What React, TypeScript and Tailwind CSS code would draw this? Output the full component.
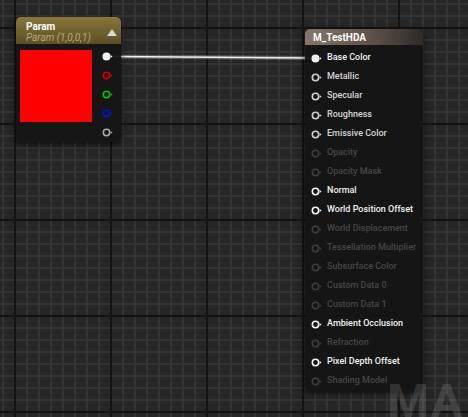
// Material graph: a Param vector node wired into the M_TestHDA result node.

type PinProps = { color: string; filled?: boolean };

function Pin({ color, filled }: PinProps) {
  return (
    <svg width="11" height="9" viewBox="0 0 11 9" className="shrink-0">
      <circle
        cx="4.5"
        cy="4.5"
        r="3.2"
        fill={filled ? color : "none"}
        stroke={color}
        strokeWidth="1.6"
      />
      <polygon points="8.7,2.9 10.6,4.5 8.7,6.1" fill={color} />
    </svg>
  );
}

const inputs: { label: string; state: "on" | "bright" | "off" | "linked" }[] = [
  { label: "Base Color", state: "linked" },
  { label: "Metallic", state: "on" },
  { label: "Specular", state: "on" },
  { label: "Roughness", state: "on" },
  { label: "Emissive Color", state: "on" },
  { label: "Opacity", state: "off" },
  { label: "Opacity Mask", state: "off" },
  { label: "Normal", state: "bright" },
  { label: "World Position Offset", state: "bright" },
  { label: "World Displacement", state: "off" },
  { label: "Tessellation Multiplier", state: "off" },
  { label: "Subsurface Color", state: "off" },
  { label: "Custom Data 0", state: "off" },
  { label: "Custom Data 1", state: "off" },
  { label: "Ambient Occlusion", state: "bright" },
  { label: "Refraction", state: "off" },
  { label: "Pixel Depth Offset", state: "bright" },
  { label: "Shading Model", state: "off" },
];

function ParamNode() {
  const pins = [
    { color: "#f2f2f2", filled: true },
    { color: "#d40000" },
    { color: "#00c800" },
    { color: "#0010e0" },
    { color: "#a8a8a8" },
  ];
  return (
    <div className="absolute left-[16px] top-[17px] w-[105px] h-[125px] rounded-[5px] bg-[#151515]/95 shadow-[0_2px_6px_rgba(0,0,0,0.7)] overflow-hidden">
      <div className="relative h-[27px] bg-[linear-gradient(to_bottom,#8a763a,#5c4f27)] pl-[10px] pt-[4px]">
        <div className="text-[10px] leading-[11px] font-bold text-white">Param</div>
        <div className="text-[10px] leading-[11px] italic text-[#b9a878]">
          Param (1,0,0,1)
        </div>
        <svg
          width="10"
          height="7"
          viewBox="0 0 10 7"
          className="absolute right-[4px] top-[12px]"
        >
          <polygon points="0,7 5,0 10,7" fill="#d6d6d6" />
        </svg>
      </div>
      <div className="flex pl-[4px] pt-[6px]">
        <div className="w-[72px] h-[72px] bg-[#ff0000]" />
        <div className="flex flex-col pl-[10px] -mt-[3.5px]">
          {pins.map((p, i) => (
            <div key={i} className="h-[19px] flex items-center">
              <Pin color={p.color} filled={p.filled} />
            </div>
          ))}
        </div>
      </div>
    </div>
  );
}

function ResultNode() {
  return (
    <div className="absolute left-[305px] top-[29px] w-[118px] h-[362px] rounded-[5px] bg-[#141414]/95 shadow-[0_2px_6px_rgba(0,0,0,0.7)] overflow-hidden">
      <div className="h-[16px] bg-[linear-gradient(to_right,#85766a,#5a5048_60%,#2e2a28)] pl-[8px] flex items-center">
        <span className="text-[10px] font-bold text-white">M_TestHDA</span>
      </div>
      <div className="flex flex-col pt-[3.5px] pl-[6px]">
        {inputs.map((it) => {
          const pin =
            it.state === "off"
              ? "#3c3c3c"
              : it.state === "on"
                ? "#cfcfcf"
                : "#f4f4f4";
          const text =
            it.state === "off"
              ? "text-[#464646]"
              : it.state === "on"
                ? "text-[#d6d6d6]"
                : "text-[#f2f2f2]";
          return (
            <div key={it.label} className="h-[19px] flex items-center gap-[5px]">
              <Pin color={pin} filled={it.state === "linked"} />
              <span className={`text-[9px] font-medium whitespace-nowrap ${text}`}>
                {it.label}
              </span>
            </div>
          );
        })}
      </div>
    </div>
  );
}

export default function App() {
  return (
    <div
      className="relative w-[468px] h-[417px] overflow-hidden bg-[#262626] [background-image:linear-gradient(to_right,#141414_2px,transparent_2px),linear-gradient(to_bottom,#141414_2px,transparent_2px),linear-gradient(to_right,#333333_2px,transparent_2px),linear-gradient(to_bottom,#333333_2px,transparent_2px)] [background-size:96px_96px,96px_96px,12px_12px,12px_12px] [background-position:14px_27px]"
      style={{ fontFamily: "Roboto, 'Liberation Sans', sans-serif" }}
    >
      <svg className="absolute inset-0" width="468" height="417">
        <line
          x1="113"
          y1="56.5"
          x2="313"
          y2="58"
          stroke="#ffffff"
          strokeOpacity="0.25"
          strokeWidth="4"
        />
        <line x1="113" y1="56.5" x2="313" y2="58" stroke="#f0f0f0" strokeWidth="1.6" />
      </svg>
      <ParamNode />
      <ResultNode />
      <div className="absolute left-[387px] top-[378px] text-[48px] leading-none font-bold text-white/15 pointer-events-none tracking-[1px]">
        MA
      </div>
    </div>
  );
}
